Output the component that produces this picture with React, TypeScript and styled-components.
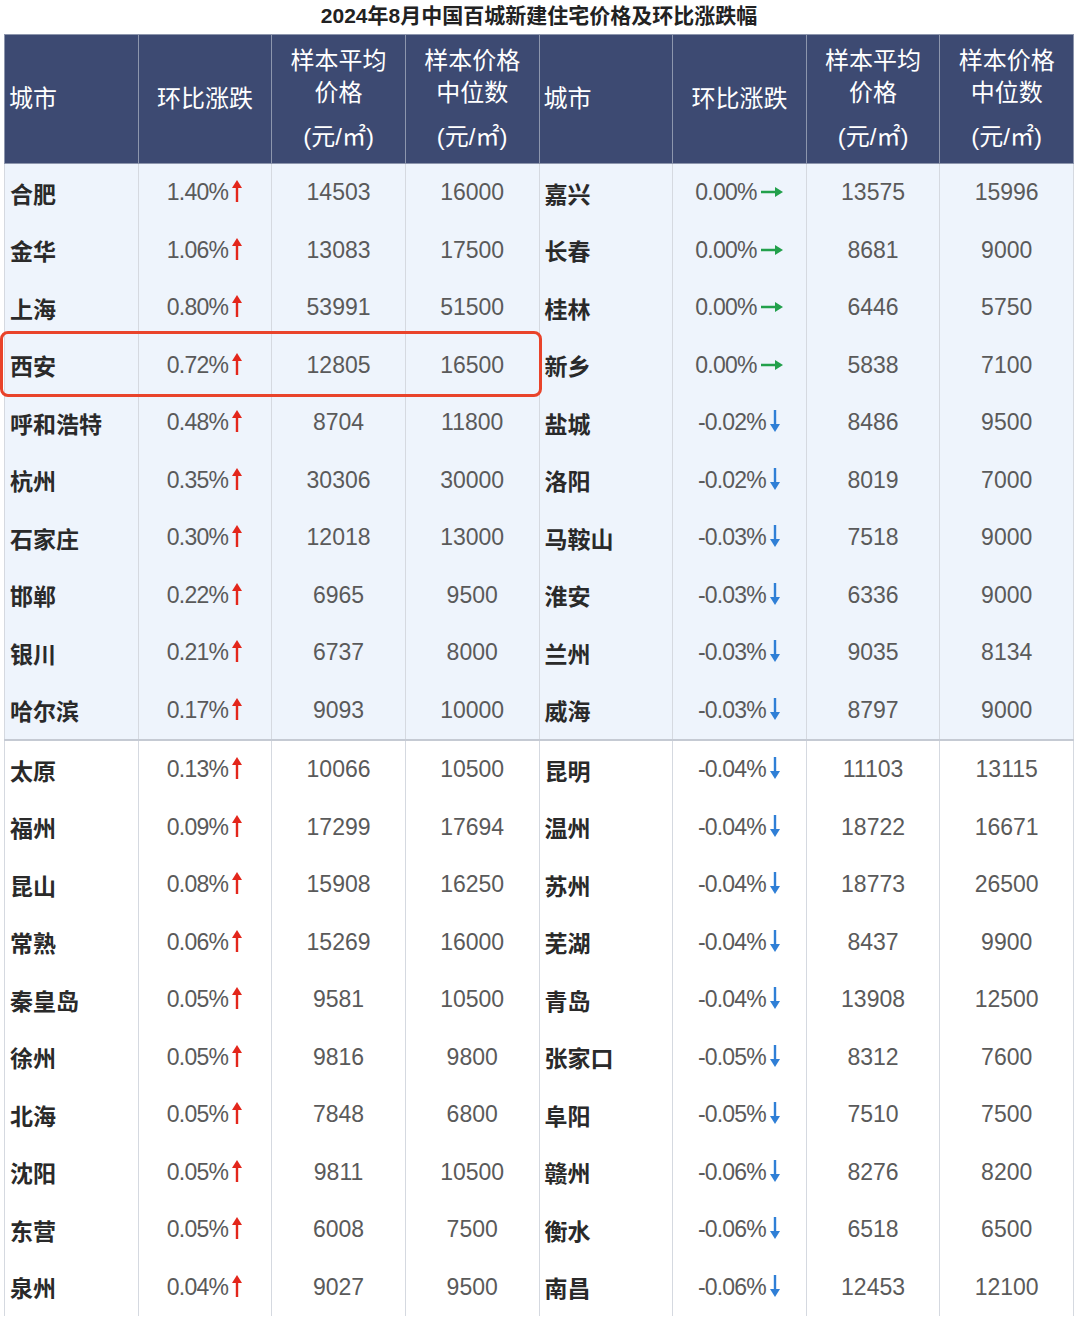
import React from 'react';
import styled, { createGlobalStyle } from 'styled-components';

const GlobalStyle = createGlobalStyle`
  body {
    margin: 0;
    background: #fff;
    font-family: "Liberation Sans", "Noto Sans CJK SC", sans-serif;
  }
`;

type Row = [string, string, string, string];

const LEFT: Row[] = [
  ['合肥', '1.40%', '14503', '16000'],
  ['金华', '1.06%', '13083', '17500'],
  ['上海', '0.80%', '53991', '51500'],
  ['西安', '0.72%', '12805', '16500'],
  ['呼和浩特', '0.48%', '8704', '11800'],
  ['杭州', '0.35%', '30306', '30000'],
  ['石家庄', '0.30%', '12018', '13000'],
  ['邯郸', '0.22%', '6965', '9500'],
  ['银川', '0.21%', '6737', '8000'],
  ['哈尔滨', '0.17%', '9093', '10000'],
  ['太原', '0.13%', '10066', '10500'],
  ['福州', '0.09%', '17299', '17694'],
  ['昆山', '0.08%', '15908', '16250'],
  ['常熟', '0.06%', '15269', '16000'],
  ['秦皇岛', '0.05%', '9581', '10500'],
  ['徐州', '0.05%', '9816', '9800'],
  ['北海', '0.05%', '7848', '6800'],
  ['沈阳', '0.05%', '9811', '10500'],
  ['东营', '0.05%', '6008', '7500'],
  ['泉州', '0.04%', '9027', '9500'],
];

const RIGHT: Row[] = [
  ['嘉兴', '0.00%', '13575', '15996'],
  ['长春', '0.00%', '8681', '9000'],
  ['桂林', '0.00%', '6446', '5750'],
  ['新乡', '0.00%', '5838', '7100'],
  ['盐城', '-0.02%', '8486', '9500'],
  ['洛阳', '-0.02%', '8019', '7000'],
  ['马鞍山', '-0.03%', '7518', '9000'],
  ['淮安', '-0.03%', '6336', '9000'],
  ['兰州', '-0.03%', '9035', '8134'],
  ['威海', '-0.03%', '8797', '9000'],
  ['昆明', '-0.04%', '11103', '13115'],
  ['温州', '-0.04%', '18722', '16671'],
  ['苏州', '-0.04%', '18773', '26500'],
  ['芜湖', '-0.04%', '8437', '9900'],
  ['青岛', '-0.04%', '13908', '12500'],
  ['张家口', '-0.05%', '8312', '7600'],
  ['阜阳', '-0.05%', '7510', '7500'],
  ['赣州', '-0.06%', '8276', '8200'],
  ['衡水', '-0.06%', '6518', '6500'],
  ['南昌', '-0.06%', '12453', '12100'],
];

const Page = styled.div`
  width: 1080px;
  padding: 0 6px 0 4px;
  box-sizing: border-box;
`;

const Title = styled.h1`
  margin: 0;
  height: 34px;
  line-height: 32px;
  text-align: center;
  font-size: 21px;
  font-weight: bold;
  color: #222;
`;

const Frame = styled.div`
  position: relative;
`;

const Table = styled.table`
  width: 1070px;
  table-layout: fixed;
  border-collapse: collapse;
`;

const Head = styled.th`
  background: #3d4a72;
  color: #fff;
  font-weight: normal;
  font-size: 24px;
  height: 128px;
  padding: 0;
  border: 1px solid #8d96ad;
  text-align: center;
  line-height: 32px;
  &.city {
    text-align: left;
    padding-left: 4px;
  }
`;

const Unit = styled.div`
  margin-top: 12px;
`;

const BodyRow = styled.tr<{ $shade: boolean; $split: boolean }>`
  background: ${(p) => (p.$shade ? '#eef4fc' : '#fff')};
  border-top: ${(p) => (p.$split ? '2px solid #c5cad3' : 'none')};
`;

const Cell = styled.td`
  height: 57.5px;
  padding: 0;
  text-align: center;
  font-size: 23px;
  color: #5a5a5a;
  border-left: 1px solid #d5d9e0;
  border-right: 1px solid #d5d9e0;
`;

const City = styled(Cell)`
  text-align: left;
  padding-left: 5px;
  color: #2a2a2a;
  font-weight: 600;
  font-size: 23px;
`;

const Pct = styled.span`
  letter-spacing: -0.8px;
`;

const ArrowSvg = styled.svg`
  vertical-align: -3px;
  margin-left: 3px;
`;

const UpArrow = () => (
  <ArrowSvg width="12" height="24" viewBox="0 0 12 24">
    <path d="M6 1 L11 9 L7.2 9 L7.2 23 L4.8 23 L4.8 9 L1 9 Z" fill="#e3261b" />
  </ArrowSvg>
);

const DownArrow = () => (
  <ArrowSvg width="12" height="24" viewBox="0 0 12 24">
    <path d="M6 23 L11 15 L7.2 15 L7.2 1 L4.8 1 L4.8 15 L1 15 Z" fill="#2f7fd6" />
  </ArrowSvg>
);

const FlatArrow = () => (
  <ArrowSvg width="24" height="12" viewBox="0 0 24 12" style={{ verticalAlign: '2px' }}>
    <path d="M23 6 L15 1 L15 4.8 L1 4.8 L1 7.2 L15 7.2 L15 11 Z" fill="#22a04b" />
  </ArrowSvg>
);

const Highlight = styled.div`
  position: absolute;
  left: -4px;
  top: 297px;
  width: 542px;
  height: 66px;
  border: 3px solid #e9432a;
  border-radius: 8px;
  box-sizing: border-box;
  pointer-events: none;
`;

const arrowFor = (v: string) => {
  if (v.startsWith('-')) return <DownArrow />;
  if (v === '0.00%') return <FlatArrow />;
  return <UpArrow />;
};

const HeadGroup = () => (
  <>
    <Head className="city">城市</Head>
    <Head>环比涨跌</Head>
    <Head>
      样本平均
      <br />
      价格
      <Unit>(元/㎡)</Unit>
    </Head>
    <Head>
      样本价格
      <br />
      中位数
      <Unit>(元/㎡)</Unit>
    </Head>
  </>
);

const Group = ({ r }: { r: Row }) => (
  <>
    <City>{r[0]}</City>
    <Cell>
      <Pct>{r[1]}</Pct>
      {arrowFor(r[1])}
    </Cell>
    <Cell>{r[2]}</Cell>
    <Cell>{r[3]}</Cell>
  </>
);

export default function App() {
  return (
    <Page>
      <GlobalStyle />
      <Title>2024年8月中国百城新建住宅价格及环比涨跌幅</Title>
      <Frame>
        <Table>
          <thead>
            <tr>
              <HeadGroup />
              <HeadGroup />
            </tr>
          </thead>
          <tbody>
            {LEFT.map((r, i) => (
              <BodyRow key={r[0]} $shade={i < 10} $split={i === 10}>
                <Group r={r} />
                <Group r={RIGHT[i]} />
              </BodyRow>
            ))}
          </tbody>
        </Table>
        <Highlight />
      </Frame>
    </Page>
  );
}
